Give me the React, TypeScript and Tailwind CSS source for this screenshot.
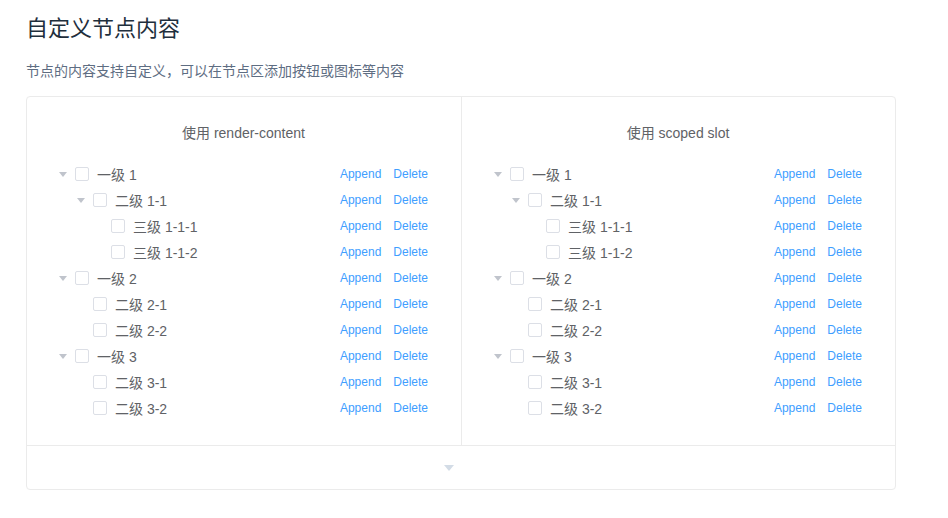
import React from 'react';

type TreeNode = {
  label: string;
  level: number;
  expandable: boolean;
};

const nodes: TreeNode[] = [
  { label: '一级 1', level: 0, expandable: true },
  { label: '二级 1-1', level: 1, expandable: true },
  { label: '三级 1-1-1', level: 2, expandable: false },
  { label: '三级 1-1-2', level: 2, expandable: false },
  { label: '一级 2', level: 0, expandable: true },
  { label: '二级 2-1', level: 1, expandable: false },
  { label: '二级 2-2', level: 1, expandable: false },
  { label: '一级 3', level: 0, expandable: true },
  { label: '二级 3-1', level: 1, expandable: false },
  { label: '二级 3-2', level: 1, expandable: false },
];

const indent = ['pl-0', 'pl-[18px]', 'pl-[36px]'];

const Caret = ({ visible }: { visible: boolean }) => (
  <span className="w-6 h-[26px] flex items-center justify-center shrink-0">
    {visible && (
      <svg width="8" height="5" viewBox="0 0 8 5">
        <polygon points="0,0 8,0 4,5" fill="#c0c4cc" />
      </svg>
    )}
  </span>
);

const TreeRow = ({ node }: { node: TreeNode }) => (
  <div className={`flex items-center h-[26px] ${indent[node.level]}`}>
    <Caret visible={node.expandable} />
    <span className="w-[14px] h-[14px] border border-[#dcdfe6] rounded-[2px] bg-white shrink-0 mr-2" />
    <div className="flex-1 flex items-center justify-between pr-2">
      <span className="text-[14px] leading-[26px] pt-px text-[#606266]">{node.label}</span>
      <span className="flex items-center text-[12px] text-[#409eff]">
        <span>Append</span>
        <span className="ml-3">Delete</span>
      </span>
    </div>
  </div>
);

const Panel = ({ title, className }: { title: string; className: string }) => (
  <div className={`pt-[26px] pb-6 ${className}`}>
    <p className="text-center text-[14px] leading-5 text-[#606266] mb-[18px]">{title}</p>
    <div>
      {nodes.map((n, i) => (
        <TreeRow key={i} node={n} />
      ))}
    </div>
  </div>
);

export default function App() {
  return (
    <div
      className="bg-white min-h-[518px] pl-[26px] pt-3"
      style={{ fontFamily: '"Liberation Sans", Arial, "Noto Sans CJK SC", sans-serif' }}
    >
      <h3 className="text-[22px] leading-[33px] text-[#1f2f3d] font-normal">自定义节点内容</h3>
      <p className="mt-[15px] text-[14px] leading-[22px] text-[#5e6d82]">
        节点的内容支持自定义，可以在节点区添加按钮或图标等内容
      </p>
      <div className="mt-[14px] w-[870px] border border-[#ebebeb] rounded">
        <div className="flex border-b border-[#ebebeb]">
          <Panel title="使用 render-content" className="w-[435px] pl-6 pr-[25px] border-r border-[#ebebeb]" />
          <Panel title="使用 scoped slot" className="flex-1 pl-6 pr-[25px]" />
        </div>
        <div className="h-[43px] flex items-center justify-center pr-6">
          <svg width="10" height="6" viewBox="0 0 10 6">
            <polygon points="0,0 10,0 5,6" fill="#d3dce6" />
          </svg>
        </div>
      </div>
    </div>
  );
}
